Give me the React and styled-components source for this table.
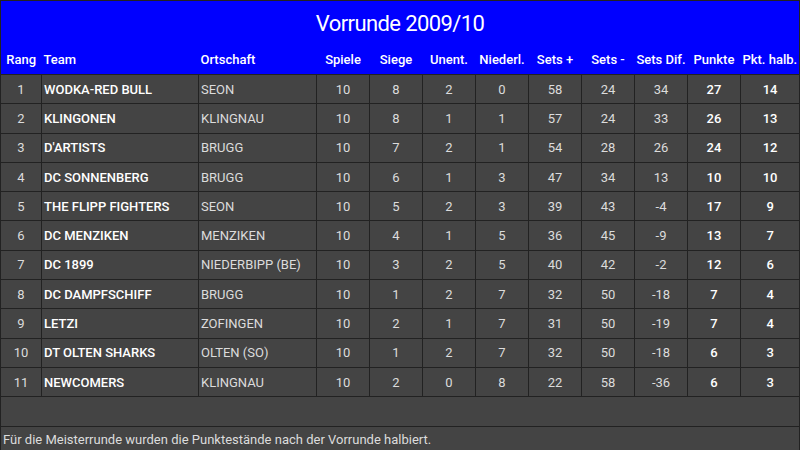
import React from "react";
import styled, { createGlobalStyle } from "styled-components";

const Global = createGlobalStyle`
  html, body { margin: 0; padding: 0; background: #444444; }
  body { font-family: Roboto, "DejaVu Sans", sans-serif; }
`;

const Table = styled.table`
  width: 799px;
  table-layout: fixed;
  border-collapse: collapse;
  background: #444444;
  color: #dcdcdc;
  font-size: 13px;
  border: 1px solid #222;
`;

const TitleCell = styled.th`
  background: #0000ff;
  color: #fff;
  font-weight: 400;
  font-size: 22px;
  letter-spacing: -0.6px;
  height: 44px;
  padding: 0;
  text-align: center;
  vertical-align: middle;
`;

const HeadCell = styled.th`
  background: #0000ff;
  color: #fff;
  font-weight: 500;
  font-size: 13px;
  height: 29px;
  padding: 0 ${(p) => (p.$align === "left" ? "0 0 2px" : "0")};
  text-align: ${(p) => p.$align || "center"};
  vertical-align: middle;
  border-bottom: 1px solid #222;
  white-space: nowrap;
`;

const Row = styled.tr`
  height: 29.3px;
`;

const Cell = styled.td`
  border: 1px solid #222;
  padding: 0 ${(p) => (p.$align === "left" ? "0 0 2px" : "0")};
  text-align: ${(p) => p.$align || "center"};
  vertical-align: middle;
  font-weight: ${(p) => (p.$bold ? 500 : 400)};
  color: ${(p) => (p.$bold ? "#ffffff" : "#dcdcdc")};
  white-space: nowrap;
  overflow: hidden;
`;

const EmptyCell = styled.td`
  height: 27px;
  border: 1px solid #222;
`;

const NoteCell = styled.td`
  height: 24px;
  border: 1px solid #222;
  padding: 0 0 0 2px;
  color: #dcdcdc;
  font-size: 13px;
  white-space: nowrap;
`;

const widths = [41, 157, 118, 53, 53, 53, 53, 53, 53, 53, 53, 59];

const headers = [
  ["Rang", "left"],
  ["Team", "left"],
  ["Ortschaft", "left"],
  ["Spiele"],
  ["Siege"],
  ["Unent."],
  ["Niederl."],
  ["Sets +"],
  ["Sets -"],
  ["Sets Dif."],
  ["Punkte"],
  ["Pkt. halb."],
];

const data = [
  [1, "WODKA-RED BULL", "SEON", 10, 8, 2, 0, 58, 24, 34, 27, 14],
  [2, "KLINGONEN", "KLINGNAU", 10, 8, 1, 1, 57, 24, 33, 26, 13],
  [3, "D'ARTISTS", "BRUGG", 10, 7, 2, 1, 54, 28, 26, 24, 12],
  [4, "DC SONNENBERG", "BRUGG", 10, 6, 1, 3, 47, 34, 13, 10, 10],
  [5, "THE FLIPP FIGHTERS", "SEON", 10, 5, 2, 3, 39, 43, -4, 17, 9],
  [6, "DC MENZIKEN", "MENZIKEN", 10, 4, 1, 5, 36, 45, -9, 13, 7],
  [7, "DC 1899", "NIEDERBIPP (BE)", 10, 3, 2, 5, 40, 42, -2, 12, 6],
  [8, "DC DAMPFSCHIFF", "BRUGG", 10, 1, 2, 7, 32, 50, -18, 7, 4],
  [9, "LETZI", "ZOFINGEN", 10, 2, 1, 7, 31, 50, -19, 7, 4],
  [10, "DT OLTEN SHARKS", "OLTEN (SO)", 10, 1, 2, 7, 32, 50, -18, 6, 3],
  [11, "NEWCOMERS", "KLINGNAU", 10, 2, 0, 8, 22, 58, -36, 6, 3],
];

export default function App() {
  return (
    <>
      <Global />
      <Table>
        <colgroup>
          {widths.map((w, i) => (
            <col key={i} style={{ width: w }} />
          ))}
        </colgroup>
        <thead>
          <tr>
            <TitleCell colSpan={12}>Vorrunde 2009/10</TitleCell>
          </tr>
          <tr>
            {headers.map(([h, a], i) => (
              <HeadCell key={i} $align={i === 0 ? undefined : a}>
                {h}
              </HeadCell>
            ))}
          </tr>
        </thead>
        <tbody>
          {data.map((r) => (
            <Row key={r[0]}>
              {r.map((v, i) => (
                <Cell
                  key={i}
                  $align={i === 1 || i === 2 ? "left" : undefined}
                  $bold={i === 1 || i === 10 || i === 11}
                >
                  {v}
                </Cell>
              ))}
            </Row>
          ))}
          <tr>
            <EmptyCell colSpan={12} />
          </tr>
          <tr>
            <NoteCell colSpan={12}>
              Für die Meisterrunde wurden die Punktestände nach der Vorrunde halbiert.
            </NoteCell>
          </tr>
        </tbody>
      </Table>
    </>
  );
}
